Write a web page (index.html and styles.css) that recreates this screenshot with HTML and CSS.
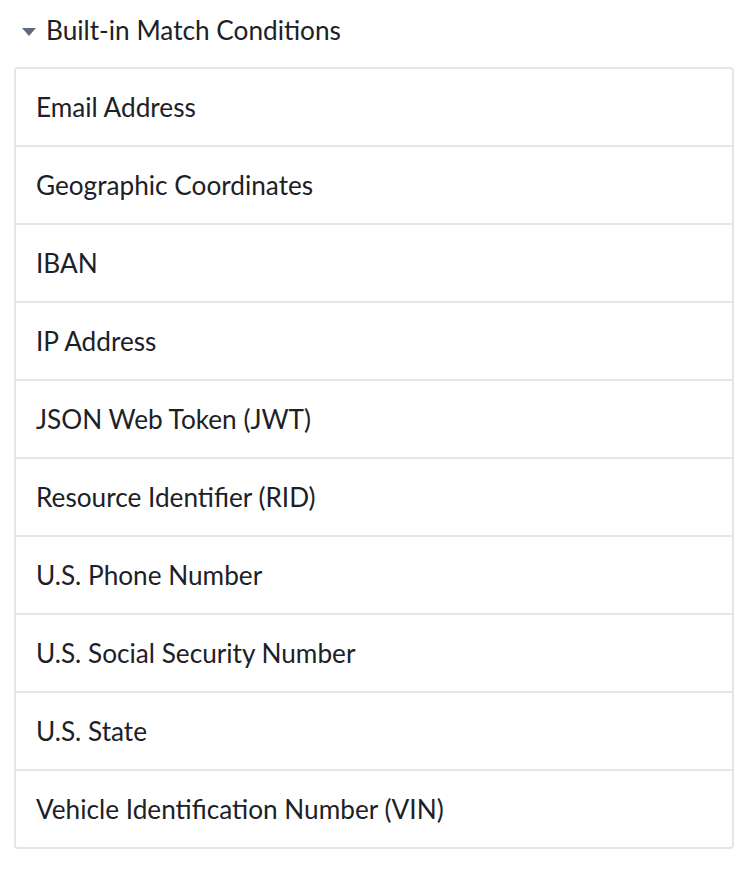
FILE: index.html
```
<!DOCTYPE html>
<html>
<head>
<meta charset="utf-8">
<link rel="stylesheet" href="styles.css">
</head>
<body>
<div class="section">
  <div class="header">
    <svg class="caret" width="14" height="8" viewBox="0 0 14 8"><path d="M0.5 0 L13.5 0 L7 7.6 Z" fill="#5f6b7c" stroke="#5f6b7c" stroke-width="0.8" stroke-linejoin="round"/></svg>
    <span class="title">Built-in Match Conditions</span>
  </div>
  <div class="list">
    <div class="row">Email Address</div>
    <div class="row">Geographic Coordinates</div>
    <div class="row">IBAN</div>
    <div class="row">IP Address</div>
    <div class="row">JSON Web Token (JWT)</div>
    <div class="row">Resource Identifier (RID)</div>
    <div class="row">U.S. Phone Number</div>
    <div class="row">U.S. Social Security Number</div>
    <div class="row">U.S. State</div>
    <div class="row">Vehicle Identification Number (VIN)</div>
  </div>
</div>
</body>
</html>
```
FILE: styles.css
```
html, body { margin: 0; padding: 0; background: #fff; }
body { font-family: "Lato", "Noto Sans", sans-serif; color: #1c2127; }
.section { padding: 0 22px 0 14px; }
.header { height: 60px; display: flex; align-items: center; padding-left: 8px; gap: 10px; margin-bottom: 7px; }
.caret { display: block; margin-top: 3px; }
.title { font-size: 26.2px; }
.list { border: 2px solid #e5e5ea; border-radius: 4px; }
.row { height: 76px; display: flex; align-items: center; padding-left: 20px; font-size: 26.2px; border-bottom: 2px solid #e5e5ea; }
.row:last-child { border-bottom: none; }
```
